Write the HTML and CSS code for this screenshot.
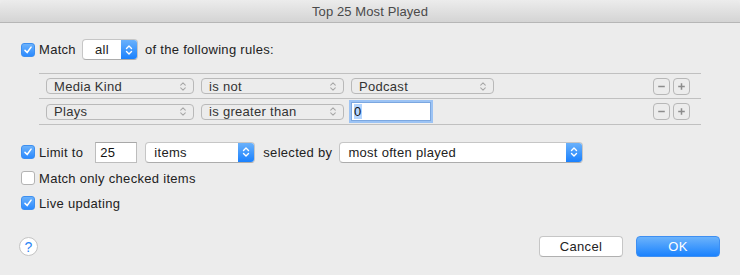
FILE: index.html
```html
<!DOCTYPE html>
<html lang="en">
<head>
  <meta charset="UTF-8" />
  <meta name="viewport" content="width=device-width, initial-scale=1.0"/>
  <title>Top 25 Most Played</title>
  <link rel="stylesheet" href="styles.css">
</head>
<body>
  <div class="window">
    <div class="titlebar">Top 25 Most Played</div>

    <div class="content">
      <!-- Match all / any -->
      <div class="row match-row">
        <span class="check checked">
          <svg viewBox="0 0 14 14"><path d="M3.5 7.4 L6 10 L10.6 3.6" /></svg>
        </span>
        <span class="label">Match</span>
        <div class="popup blue small">
          <span class="popup-text center">all</span>
          <span class="stepper">
            <svg viewBox="0 0 8 12"><path d="M1.5 4.5 L4 2 L6.5 4.5 M1.5 7.5 L4 10 L6.5 7.5" /></svg>
          </span>
        </div>
        <span class="label">of the following rules:</span>
      </div>

      <!-- Rules -->
      <div class="rules">
        <div class="rule">
          <div class="popup plain w1">
            <span class="popup-text">Media Kind</span>
            <svg class="chev" viewBox="0 0 8 12"><path d="M1.5 4.5 L4 2 L6.5 4.5 M1.5 7.5 L4 10 L6.5 7.5" /></svg>
          </div>
          <div class="popup plain w2">
            <span class="popup-text">is not</span>
            <svg class="chev" viewBox="0 0 8 12"><path d="M1.5 4.5 L4 2 L6.5 4.5 M1.5 7.5 L4 10 L6.5 7.5" /></svg>
          </div>
          <div class="popup plain w2">
            <span class="popup-text">Podcast</span>
            <svg class="chev" viewBox="0 0 8 12"><path d="M1.5 4.5 L4 2 L6.5 4.5 M1.5 7.5 L4 10 L6.5 7.5" /></svg>
          </div>
          <div class="rule-buttons">
            <span class="square-btn">
              <svg viewBox="0 0 16 16"><path d="M4.5 8 H11.5" /></svg>
            </span>
            <span class="square-btn">
              <svg viewBox="0 0 16 16"><path d="M4.5 8 H11.5 M8 4.5 V11.5" /></svg>
            </span>
          </div>
        </div>
        <div class="rule">
          <div class="popup plain w1">
            <span class="popup-text">Plays</span>
            <svg class="chev" viewBox="0 0 8 12"><path d="M1.5 4.5 L4 2 L6.5 4.5 M1.5 7.5 L4 10 L6.5 7.5" /></svg>
          </div>
          <div class="popup plain w2">
            <span class="popup-text">is greater than</span>
            <svg class="chev" viewBox="0 0 8 12"><path d="M1.5 4.5 L4 2 L6.5 4.5 M1.5 7.5 L4 10 L6.5 7.5" /></svg>
          </div>
          <div class="field focused"><span class="selected">0</span></div>
          <div class="rule-buttons">
            <span class="square-btn">
              <svg viewBox="0 0 16 16"><path d="M4.5 8 H11.5" /></svg>
            </span>
            <span class="square-btn">
              <svg viewBox="0 0 16 16"><path d="M4.5 8 H11.5 M8 4.5 V11.5" /></svg>
            </span>
          </div>
        </div>
      </div>

      <!-- Limit -->
      <div class="row limit-row">
        <span class="check checked">
          <svg viewBox="0 0 14 14"><path d="M3.5 7.4 L6 10 L10.6 3.6" /></svg>
        </span>
        <span class="label">Limit to</span>
        <div class="field limit-field">25</div>
        <div class="popup blue items">
          <span class="popup-text">items</span>
          <span class="stepper">
            <svg viewBox="0 0 8 12"><path d="M1.5 4.5 L4 2 L6.5 4.5 M1.5 7.5 L4 10 L6.5 7.5" /></svg>
          </span>
        </div>
        <span class="label">selected by</span>
        <div class="popup blue order">
          <span class="popup-text">most often played</span>
          <span class="stepper">
            <svg viewBox="0 0 8 12"><path d="M1.5 4.5 L4 2 L6.5 4.5 M1.5 7.5 L4 10 L6.5 7.5" /></svg>
          </span>
        </div>
      </div>

      <div class="row option-row">
        <span class="check"></span>
        <span class="label">Match only checked items</span>
      </div>

      <div class="row option-row">
        <span class="check checked">
          <svg viewBox="0 0 14 14"><path d="M3.5 7.4 L6 10 L10.6 3.6" /></svg>
        </span>
        <span class="label">Live updating</span>
      </div>

      <!-- Footer -->
      <div class="footer">
        <span class="help">?</span>
        <div class="footer-buttons">
          <button class="button">Cancel</button>
          <button class="button primary">OK</button>
        </div>
      </div>
    </div>
  </div>
</body>
</html>
```

FILE: styles.css
```css
body {
  margin: 0;
  padding: 0;
  font-family: 'Liberation Sans', Arial, sans-serif;
  font-size: 13px;
  letter-spacing: 0.3px;
  color: #222;
  background-color: #ececec;
}
.window {
  width: 740px;
  height: 275px;
  background-color: #ececec;
  overflow: hidden;
}
.titlebar {
  height: 22px;
  line-height: 23px;
  text-align: center;
  letter-spacing: 0.1px;
  color: #4a4a4a;
  background: linear-gradient(#ececec, #d4d4d4);
  border-bottom: 1px solid #b6b6b6;
  border-radius: 5px 5px 0 0;
}
.content {
  padding: 16px 20px 0 20px;
}
.row {
  display: flex;
  align-items: center;
}
.label {
  margin-left: 4px;
}
.check {
  width: 12px;
  height: 12px;
  margin-left: 1px;
  border: 1px solid #b3b3b3;
  border-radius: 3px;
  background: #fff;
  display: flex;
  align-items: center;
  justify-content: center;
}
.check.checked {
  border-color: #3d8ff0;
  background: linear-gradient(#6cb2fb, #2b8aff);
}
.check svg {
  width: 14px;
  height: 14px;
  fill: none;
  stroke: #fff;
  stroke-width: 1.8;
  stroke-linecap: round;
  stroke-linejoin: round;
}

/* popups */
.popup {
  display: flex;
  align-items: center;
  box-sizing: border-box;
  border-radius: 4px;
  overflow: hidden;
}
.popup-text {
  flex: 1;
  white-space: nowrap;
}
.popup-text.center {
  text-align: center;
}
.popup.blue {
  height: 21px;
  background: #fff;
  border: 1px solid #c6c6c6;
  border-bottom-color: #acacac;
}
.popup.blue .popup-text {
  padding-left: 8px;
}
.stepper {
  width: 16px;
  align-self: stretch;
  background: linear-gradient(#6ab1fb, #1a81fe);
  display: flex;
  align-items: center;
  justify-content: center;
}
.stepper svg {
  width: 8px;
  height: 12px;
  fill: none;
  stroke: #fff;
  stroke-width: 1.4;
  stroke-linecap: round;
  stroke-linejoin: round;
}
.popup.small {
  width: 56px;
  margin-left: 6px;
  margin-right: 3px;
}
.popup.small .popup-text {
  padding-left: 0;
}
.popup.items {
  width: 110px;
  margin-left: 8px;
  margin-right: 4px;
}
.popup.order {
  width: 244px;
  margin-left: 7px;
}
.popup.plain {
  height: 16px;
  border: 1px solid #b9b9b9;
  border-radius: 4px;
  color: #333;
  padding: 0 6px 0 7px;
  margin-right: 7px;
}
.popup.w1 {
  width: 148px;
}
.popup.w2 {
  width: 143px;
}
.chev {
  width: 8px;
  height: 11px;
  fill: none;
  stroke: #a6a6a6;
  stroke-width: 1.1;
  stroke-linecap: round;
  stroke-linejoin: round;
}

/* rules */
.rules {
  margin: 13px 0 0 19px;
  width: 662px;
  border-top: 1px solid #c0c0c0;
}
.rule {
  display: flex;
  align-items: center;
  height: 24px;
  padding-left: 7px;
  border-bottom: 1px solid #c0c0c0;
}
.rule + .rule {
  height: 25px;
}
.rule-buttons {
  margin-left: auto;
  margin-right: 11px;
  display: flex;
  gap: 3px;
}
.square-btn {
  width: 15px;
  height: 15px;
  border: 1px solid #b7b7b7;
  border-radius: 4px;
  display: flex;
}
.square-btn svg {
  width: 15px;
  height: 15px;
  fill: none;
  stroke: #8c8c8c;
  stroke-width: 1.6;
}

/* text fields */
.field {
  box-sizing: border-box;
  background: #fff;
  border: 1px solid #bdbdbd;
  border-top-color: #a8a8a8;
  height: 21px;
  line-height: 19px;
  padding-left: 4px;
  color: #111;
}
.field.focused {
  width: 80px;
  height: 19px;
  line-height: 17px;
  margin-left: 0;
  padding-left: 2px;
  border-color: #7ba7e0;
  box-shadow: 0 0 0 2px #9cc3f4;
}
.selected {
  background: #b4d5fe;
}
.limit-field {
  width: 42px;
  margin-left: 12px;
}

.limit-row {
  margin-top: 16px;
  height: 22px;
}
.option-row {
  margin-top: 5px;
  height: 20px;
}

/* footer */
.footer {
  display: flex;
  align-items: center;
  margin-top: 22px;
  height: 22px;
}
.help {
  width: 19px;
  height: 19px;
  box-sizing: border-box;
  border: 1px solid #c4c4c4;
  border-radius: 50%;
  background: #fff;
  color: #2d86f6;
  font-size: 14px;
  letter-spacing: 0;
  text-align: center;
  line-height: 18px;
  margin-left: -1px;
}
.footer-buttons {
  margin-left: auto;
  display: flex;
  gap: 13px;
}
.button {
  width: 84px;
  height: 21px;
  font-family: 'Liberation Sans', Arial, sans-serif;
  font-size: 13px;
  letter-spacing: 0.3px;
  color: #222;
  background: #fff;
  border: 1px solid #c6c6c6;
  border-bottom-color: #b0b0b0;
  border-radius: 4px;
  padding: 0;
  cursor: pointer;
}
.button.primary {
  color: #fff;
  border-color: #3e8ff2;
  background: linear-gradient(#6cb3fb, #1a82fe);
}
```
